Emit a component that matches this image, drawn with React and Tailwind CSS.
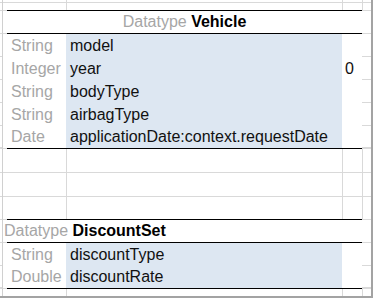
const GRID = "border-[#d9d9d9]";

function Side({ tick }) {
  return (
    <div className="flex w-[7px] shrink-0">
      <div className={tick ? "w-[2px] border-b border-[#d9d9d9]" : "w-[2px]"} />
      <div className="w-px bg-[#d0d0d0]" />
      <div className="w-[4px]" />
    </div>
  );
}

function Line({ black }) {
  return (
    <div className="flex h-px shrink-0">
      <div className="w-[2px] bg-[#d9d9d9]" />
      <div className="w-px bg-[#d0d0d0]" />
      <div className="w-[4px] bg-[#d9d9d9]" />
      <div className={black ? "w-[355px] bg-black" : "w-[355px] bg-[#d9d9d9]"} />
      <div className="flex-1 bg-[#d9d9d9]" />
    </div>
  );
}

function GridRow({ h }) {
  return (
    <div className={`flex shrink-0 ${h}`}>
      <Side />
      <div className="w-[59px]" />
      <div className={`w-[276px] border-l ${GRID}`} />
      <div className={`w-[20px] border-l ${GRID}`} />
      <div className={`flex-1 border-l ${GRID}`} />
    </div>
  );
}

function Field({ type, name, value, h }) {
  return (
    <div className={`flex shrink-0 whitespace-nowrap ${h}`}>
      <Side tick />
      <div className="w-[59px] pl-[4px] text-[#a6a6a6]">{type}</div>
      <div className="w-[276px] bg-[#dde7f2] pl-[4px] text-[#111]">{name}</div>
      <div className="w-[20px] pl-[3px] text-[#111]">{value}</div>
      <div className="flex-1 border-b border-[#d9d9d9]" />
    </div>
  );
}

export default function App() {
  return (
    <div className="flex h-[298px] w-[373px] flex-col overflow-hidden border-r-2 border-b-2 border-[#a3a3a3] bg-white font-['Liberation_Sans',Arial,sans-serif] text-[16px]">
      <GridRow h="h-[2px]" />
      <Line />
      <GridRow h="h-[7px]" />
      <Line black />

      {/* Vehicle */}
      <div className="flex h-[22px] shrink-0 leading-[22px] whitespace-nowrap">
        <Side />
        <div className="w-[355px] text-center">
          <span className="text-[#a6a6a6]">Datatype </span>
          <span className="font-bold text-black">Vehicle</span>
        </div>
        <div className="flex-1" />
      </div>
      <Line black />
      <Field h="h-[23px] leading-[23px]" type="String" name="model" />
      <Field h="h-[23px] leading-[23px]" type="Integer" name="year" value="0" />
      <Field h="h-[23px] leading-[23px]" type="String" name="bodyType" />
      <Field h="h-[23px] leading-[23px]" type="String" name="airbagType" />
      <Field h="h-[22px] leading-[22px]" type="Date" name="applicationDate:context.requestDate" />
      <Line black />

      <GridRow h="h-[23px]" />
      <Line />
      <GridRow h="h-[23px]" />
      <Line />
      <GridRow h="h-[22px]" />
      <Line black />

      {/* DiscountSet */}
      <div className="flex h-[22px] shrink-0 leading-[22px] whitespace-nowrap">
        <div className="w-[2px]" />
        <div className="w-px bg-[#d0d0d0]" />
        <div className="w-[359px] pl-px">
          <span className="text-[#a6a6a6]">Datatype </span>
          <span className="font-bold text-black">DiscountSet</span>
        </div>
        <div className="flex-1" />
      </div>
      <Line black />
      <Field h="h-[23px] leading-[23px]" type="String" name="discountType" />
      <Field h="h-[22px] leading-[22px]" type="Double" name="discountRate" />
      <Line black />
      <GridRow h="h-[7px]" />
    </div>
  );
}
